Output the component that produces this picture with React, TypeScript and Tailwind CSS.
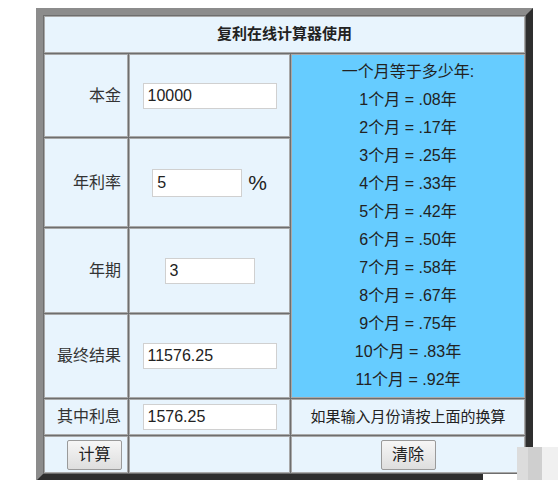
import React from 'react';

const cell = 'border border-[#a9a9a9] bg-[#e8f4fd] flex items-center';
const input = 'h-[26px] border border-[#d0d0d0] bg-white pl-[4px] text-[16px] text-[#222] outline-none';
const button = 'w-[55px] h-[30px] rounded-[2px] border border-[#9a9a9a] bg-gradient-to-b from-[#f6f6f6] to-[#dedede] text-[16px] text-[#222]';

const months = ['.08', '.17', '.25', '.33', '.42', '.50', '.58', '.67', '.75', '.83', '.92'];

export default function App() {
    return (
        <div
            className="relative w-[558px] h-[480px] overflow-hidden bg-white pl-[36px] pt-[8px]"
            style={{ fontFamily: '"Liberation Sans", "Noto Sans CJK SC", sans-serif' }}
        >
            <div className="w-[497px] border-[7px] border-t-[#8c8c8c] border-l-[#8c8c8c] border-b-[#2e2e2e] border-r-[#2e2e2e] bg-[#6e6e6e] p-px">
                <div className="grid grid-cols-[84px_161px_234px] grid-rows-[37px_83px_89px_85px_84px_36px_37px] gap-px">
                    {/* 标题 */}
                    <div className={`${cell} col-span-3 justify-center text-[15px] font-bold text-[#222]`}>
                        复利在线计算器使用
                    </div>

                    {/* 本金 */}
                    <div className={`${cell} justify-end pr-[6px] text-[16px] text-[#333]`}>本金</div>
                    <div className={`${cell} justify-center`}>
                        <input className={`${input} w-[134px]`} defaultValue="10000" />
                    </div>

                    {/* 换算表 */}
                    <div className="row-span-4 border border-[#a9a9a9] bg-[#66ccff] flex flex-col items-center justify-center text-[16px] leading-[28px] text-[#222]">
                        <div>一个月等于多少年:</div>
                        {months.map((m, i) => (
                            <div key={m}>
                                {i + 1}个月 = {m}年
                            </div>
                        ))}
                    </div>

                    {/* 年利率 */}
                    <div className={`${cell} justify-end pr-[6px] text-[16px] text-[#333]`}>年利率</div>
                    <div className={`${cell} justify-center gap-[6px]`}>
                        <input className={`${input} w-[90px] h-[28px]`} defaultValue="5" />
                        <span className="text-[21px] text-[#222]">%</span>
                    </div>

                    {/* 年期 */}
                    <div className={`${cell} justify-end pr-[6px] text-[16px] text-[#333]`}>年期</div>
                    <div className={`${cell} justify-center`}>
                        <input className={`${input} w-[90px]`} defaultValue="3" />
                    </div>

                    {/* 最终结果 */}
                    <div className={`${cell} justify-end pr-[6px] text-[16px] text-[#333]`}>最终结果</div>
                    <div className={`${cell} justify-center`}>
                        <input className={`${input} w-[134px]`} defaultValue="11576.25" />
                    </div>

                    {/* 其中利息 */}
                    <div className={`${cell} justify-end pr-[6px] text-[16px] text-[#333]`}>其中利息</div>
                    <div className={`${cell} justify-center`}>
                        <input className={`${input} w-[134px]`} defaultValue="1576.25" />
                    </div>
                    <div className={`${cell} justify-center text-[15px] text-[#222]`}>如果输入月份请按上面的换算</div>

                    {/* 按钮 */}
                    <div className={`${cell} justify-end pr-[5px]`}>
                        <button className={button}>计算</button>
                    </div>
                    <div className={cell} />
                    <div className={`${cell} justify-center`}>
                        <button className={button}>清除</button>
                    </div>
                </div>
            </div>

            {/* 右下角的遮挡痕迹 */}
            <div className="absolute left-[483px] top-[474px] w-[75px] h-[6px] bg-white" />
            <div className="absolute left-[517px] top-[447px] h-[33px] flex">
                <div className="w-[11px] bg-[#dcdcdc]" />
                <div className="w-[14px] bg-[#cfcfcf]" />
                <div className="w-[16px] bg-[#f0f0f0]" />
            </div>
        </div>
    );
}
